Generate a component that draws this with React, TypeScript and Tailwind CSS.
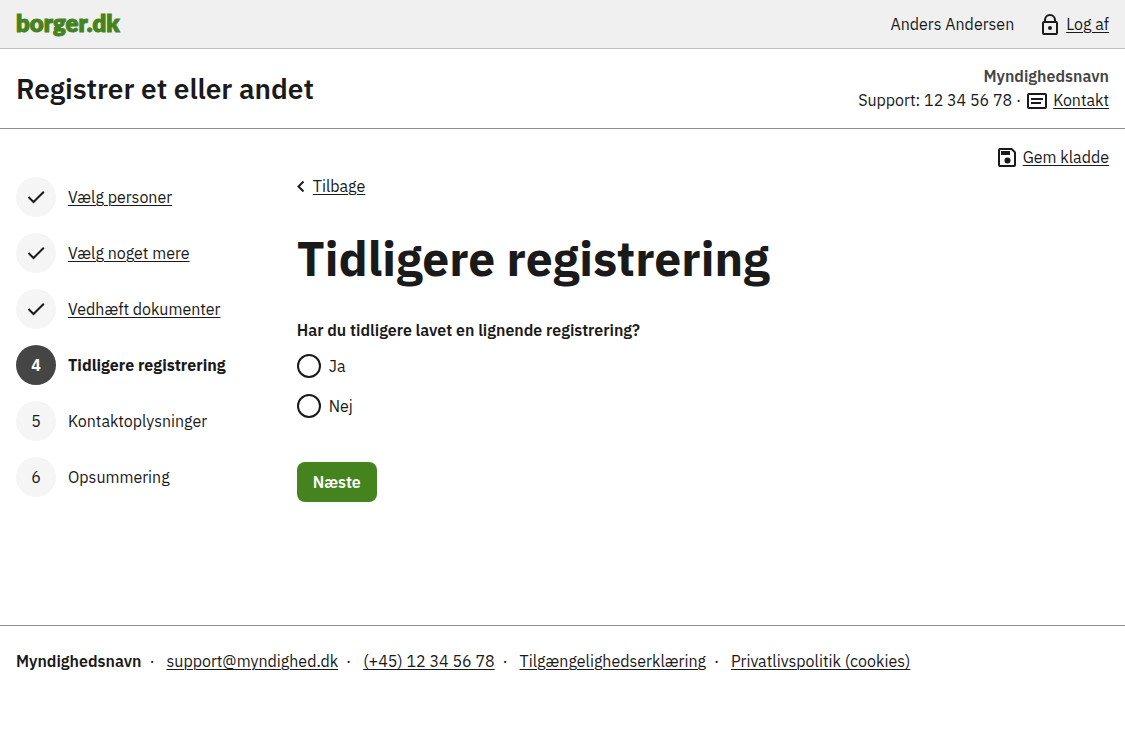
import { useState } from "react";

type Step = { label: string; state: "done" | "current" | "upcoming" };

const steps: Step[] = [
  { label: "Vælg personer", state: "done" },
  { label: "Vælg noget mere", state: "done" },
  { label: "Vedhæft dokumenter", state: "done" },
  { label: "Tidligere registrering", state: "current" },
  { label: "Kontaktoplysninger", state: "upcoming" },
  { label: "Opsummering", state: "upcoming" },
];

const footerLinks = [
  "support@myndighed.dk",
  "(+45) 12 34 56 78",
  "Tilgængelighedserklæring",
  "Privatlivspolitik (cookies)",
];

const link = "underline decoration-1 underline-offset-2";

function LockIcon() {
  return (
    <svg className="h-6 w-6" viewBox="0 0 24 24" fill="none" stroke="currentColor" strokeWidth="2" aria-hidden="true">
      <rect x="5" y="10" width="14" height="12" rx="1" />
      <path d="M7 10V8a5 5 0 0 1 10 0v2" />
      <circle cx="12" cy="16" r="2" fill="currentColor" stroke="none" />
    </svg>
  );
}

function MessageIcon() {
  return (
    <svg className="h-6 w-6" viewBox="0 0 24 24" fill="none" stroke="currentColor" strokeWidth="2" aria-hidden="true">
      <rect x="3" y="6" width="18" height="14" rx="1" />
      <path d="M6 11h12M6 15h10" />
    </svg>
  );
}

function SaveIcon() {
  return (
    <svg className="h-6 w-6" viewBox="0 0 24 24" fill="none" stroke="currentColor" strokeWidth="2" aria-hidden="true">
      <path d="M5 4h11.600L20 7.400V20a1 1 0 0 1-1 1H5a1 1 0 0 1-1-1V5a1 1 0 0 1 1-1Z" />
      <path d="M6 6h9v4H6Z" fill="currentColor" stroke="none" />
      <circle cx="12.500" cy="15.500" r="3" fill="currentColor" stroke="none" />
    </svg>
  );
}

function CheckIcon() {
  return (
    <svg className="h-6 w-6" viewBox="0 0 24 24" fill="none" stroke="currentColor" strokeWidth="2" aria-hidden="true">
      <path d="m4.500 12 5 5L19.800 6.700" />
    </svg>
  );
}

function StepItem({ step, number }: { step: Step; number: number }) {
  const current = step.state === "current";
  return (
    <li className="flex items-center gap-3" aria-current={current ? "step" : undefined}>
      <span
        className={
          current
            ? "flex h-10 w-10 shrink-0 items-center justify-center rounded-full bg-[#454545] font-bold text-white"
            : "flex h-10 w-10 shrink-0 items-center justify-center rounded-full bg-[#f5f5f5]"
        }
      >
        {step.state === "done" ? <CheckIcon /> : number}
      </span>
      {step.state === "done" ? (
        <a href="#" className={link}>{step.label}</a>
      ) : (
        <span className={current ? "font-bold" : ""}>{step.label}</span>
      )}
    </li>
  );
}

export default function App() {
  const [answer, setAnswer] = useState("");

  return (
    <div className="bg-white font-['IBM_Plex_Sans','Noto_Sans',sans-serif] text-base leading-6 text-[#1a1a1a]">
      <header>
        <div className="flex h-[49px] items-center justify-between border-b border-[#bfbfbf] bg-[#f0f0f0] px-4">
          <a href="#" className="pb-0.5 text-2xl leading-6 text-[#45831e]">
            <span className="font-[family-name:Lato] font-extrabold [-webkit-text-stroke:1px_#45831e] [paint-order:stroke_fill]">borger.dk</span>
          </a>
          <div className="flex items-center gap-6">
            <span>Anders Andersen</span>
            <a href="#" className="flex items-center gap-1">
              <LockIcon />
              <span className={link}>Log af</span>
            </a>
          </div>
        </div>
        <div className="flex h-20 items-center justify-between border-b border-[#8c8c8c] px-4">
          <p className="text-[28px] leading-9 font-semibold">Registrer et eller andet</p>
          <div className="pb-0.5 text-right">
            <p className="font-semibold text-[#454545]">Myndighedsnavn</p>
            <p className="flex items-center gap-1">
              <span>Support: 12 34 56 78 ·</span>
              <a href="#" className="flex items-center gap-1">
                <MessageIcon />
                <span className={link}>Kontakt</span>
              </a>
            </p>
          </div>
        </div>
      </header>

      <div className="px-4 pt-4 pb-[123px]">
        <div className="flex justify-end">
          <button type="button" className="flex items-center gap-1">
            <SaveIcon />
            <span className={link}>Gem kladde</span>
          </button>
        </div>
        <div className="grid grid-cols-[1fr_3fr] gap-2.5 pt-[5px]">
          <nav className="pt-[3px] whitespace-nowrap">
            <ol className="flex flex-col gap-4">
              {steps.map((step, i) => (
                <StepItem key={step.label} step={step} number={i + 1} />
              ))}
            </ol>
          </nav>
          <main>
            <a href="#" className="flex w-fit items-center gap-2">
              <svg className="h-3 w-2" viewBox="0 0 8 12" fill="none" stroke="currentColor" strokeWidth="2" aria-hidden="true">
                <path d="M6.500 1.500 1.500 6.500l5 5" />
              </svg>
              <span className={link}>Tilbage</span>
            </a>
            <h1 className="mt-8 text-5xl leading-14 font-bold">Tidligere registrering</h1>
            <form onSubmit={(e) => e.preventDefault()}>
              <fieldset>
                <legend className="pt-8 font-semibold">Har du tidligere lavet en lignende registrering?</legend>
                <div className="flex flex-col gap-4 pt-3">
                  {["Ja", "Nej"].map((option) => (
                    <label key={option} className="flex w-fit items-center gap-2">
                      <input
                        type="radio"
                        name="registrering"
                        value={option}
                        checked={answer === option}
                        onChange={() => setAnswer(option)}
                        className="h-6 w-6 appearance-none rounded-full border-2 border-[#1a1a1a] bg-white checked:border-8"
                      />
                      {option}
                    </label>
                  ))}
                </div>
              </fieldset>
              <button type="submit" className="mt-11 h-10 rounded-lg bg-[#45831e] px-4 font-semibold text-white">
                Næste
              </button>
            </form>
          </main>
        </div>
      </div>

      <footer className="border-t border-[#8c8c8c] px-4 pt-[23px] pb-6">
        <ul className="flex flex-wrap">
          <li className="font-semibold">Myndighedsnavn</li>
          {footerLinks.map((label) => (
            <li key={label} className="flex">
              <span className="w-[25px] pr-1 text-center" aria-hidden="true">·</span>
              <a href="#" className={link}>{label}</a>
            </li>
          ))}
        </ul>
      </footer>
    </div>
  );
}
